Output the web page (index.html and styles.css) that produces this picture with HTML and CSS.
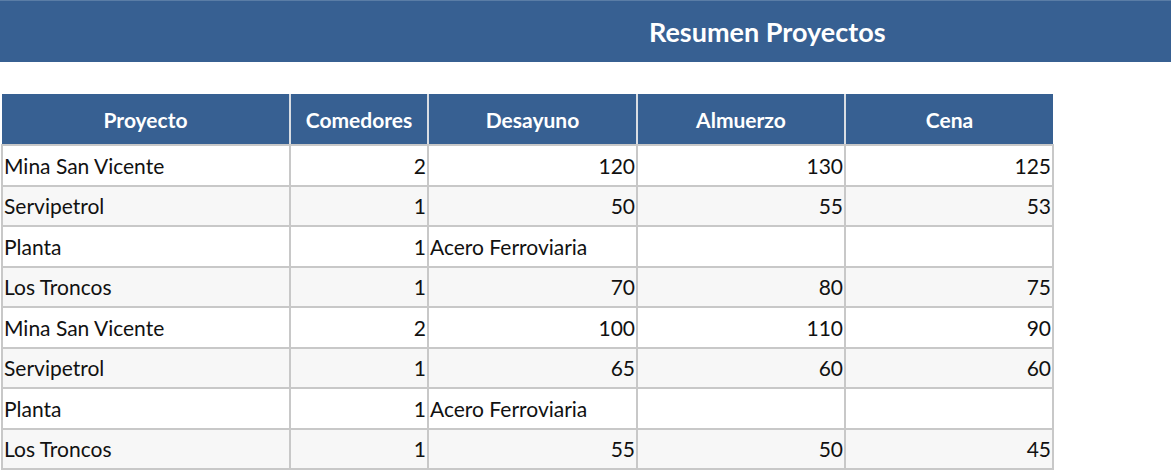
FILE: index.html
```html
<!DOCTYPE html>
<html lang="es">
<head>
<meta charset="utf-8">
<title>Resumen Proyectos</title>
<link rel="stylesheet" href="styles.css">
</head>
<body>
<header class="title-bar"><h1 class="title">Resumen Proyectos</h1></header>
<table class="summary">
  <colgroup>
    <col class="c1"><col class="c2"><col class="c3"><col class="c4"><col class="c5">
  </colgroup>
  <thead>
    <tr><th>Proyecto</th><th>Comedores</th><th>Desayuno</th><th>Almuerzo</th><th>Cena</th></tr>
  </thead>
  <tbody>
    <tr><td>Mina San Vicente</td><td class="num">2</td><td class="num">120</td><td class="num">130</td><td class="num">125</td></tr>
    <tr><td>Servipetrol</td><td class="num">1</td><td class="num">50</td><td class="num">55</td><td class="num">53</td></tr>
    <tr><td>Planta</td><td class="num">1</td><td>Acero Ferroviaria</td><td></td><td></td></tr>
    <tr><td>Los Troncos</td><td class="num">1</td><td class="num">70</td><td class="num">80</td><td class="num">75</td></tr>
    <tr><td>Mina San Vicente</td><td class="num">2</td><td class="num">100</td><td class="num">110</td><td class="num">90</td></tr>
    <tr><td>Servipetrol</td><td class="num">1</td><td class="num">65</td><td class="num">60</td><td class="num">60</td></tr>
    <tr><td>Planta</td><td class="num">1</td><td>Acero Ferroviaria</td><td></td><td></td></tr>
    <tr><td>Los Troncos</td><td class="num">1</td><td class="num">55</td><td class="num">50</td><td class="num">45</td></tr>
  </tbody>
</table>
</body>
</html>
```
FILE: styles.css
```css
html, body {
  margin: 0;
  padding: 0;
  background: #ffffff;
  font-family: Lato, "Open Sans", "Liberation Sans", sans-serif;
  color: #111111;
}
.title-bar {
  background: #376092;
  height: 62px;
  border-top: 1px solid #5a7da6;
  box-sizing: border-box;
  display: flex;
  align-items: center;
}
.title {
  margin: 0;
  padding-left: 649px;
  color: #ffffff;
  font-size: 27px;
  font-weight: 700;
  line-height: 1;
}
.summary {
  margin-top: 32px;
  margin-left: 1px;
  border-collapse: collapse;
  table-layout: fixed;
  width: 1051px;
  font-size: 21px;
}
.c1 { width: 288px; }
.c2 { width: 138px; }
.c3 { width: 209px; }
.c4 { width: 208px; }
.c5 { width: 208px; }
.summary th {
  background: #376092;
  color: #ffffff;
  font-weight: 700;
  font-size: 21px;
  height: 50px;
  padding: 0;
  text-align: center;
  border-left: 2px solid #d9dde3;
  border-bottom: 2px solid #c8c8c8;
}
.summary th:first-child { border-left: none; }
.summary td {
  height: 38.5px;
  padding: 0 2px 0 1px;
  border: 2px solid #c8c8c8;
  white-space: nowrap;
  overflow: visible;
  line-height: 1;
}
.summary td.num { text-align: right; padding-right: 1px; }
.summary tbody tr:nth-child(even) td { background: #f7f7f7; }
```
